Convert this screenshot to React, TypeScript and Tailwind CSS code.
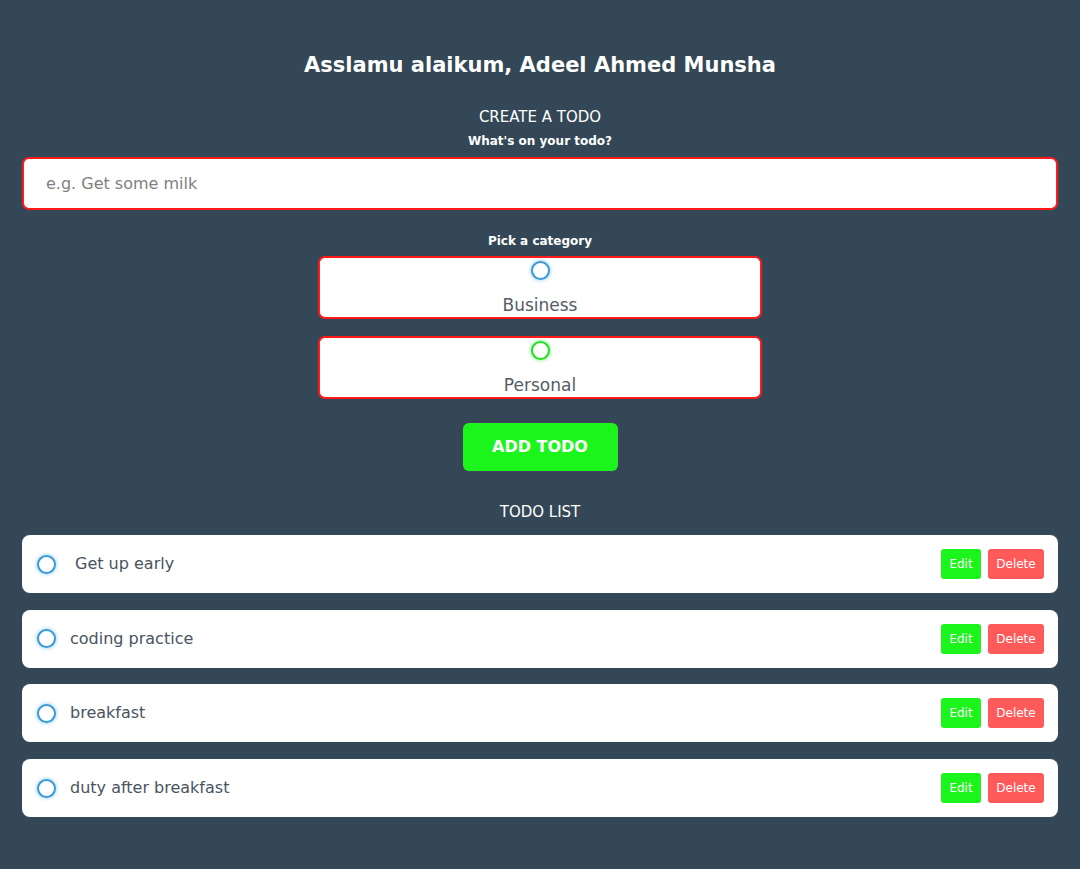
const todos = [
  { text: " Get up early", indent: true },
  { text: "coding practice" },
  { text: "breakfast" },
  { text: "duty after breakfast" },
];

const font = { fontFamily: '"DejaVu Sans", "Noto Sans", sans-serif' };

function Radio({ color }: { color: "blue" | "green" }) {
  return (
    <span
      className={
        color === "blue"
          ? "inline-block h-[19px] w-[19px] shrink-0 rounded-full border-2 border-[#3a9bd5] bg-white shadow-[0_0_4px_rgba(58,155,213,0.6)]"
          : "inline-block h-[19px] w-[19px] shrink-0 rounded-full border-2 border-[#22e022] bg-white shadow-[0_0_4px_rgba(34,224,34,0.6)]"
      }
    />
  );
}

export default function App() {
  return (
    <main className="min-h-[869px] bg-[#334756] px-[22px] pb-10 pt-[50px] text-white" style={font}>
      <h1 className="text-center text-[21px] font-bold leading-[30px]">
        Asslamu alaikum, Adeel Ahmed Munsha
      </h1>

      <section className="mt-[27px] flex flex-col items-center">
        <p className="text-[15px] leading-[20px] text-white">CREATE A TODO</p>
        <p className="mt-[6px] text-[12px] font-bold leading-[16px]">What's on your todo?</p>
        <div className="mt-[8px] h-[53px] w-full rounded-[7px] border-2 border-[#ff1a1a] bg-white px-[22px] text-[16px] leading-[49px] text-[#808080]">
          e.g. Get some milk
        </div>

        <p className="mt-[22px] text-[12px] font-bold leading-[18px]">Pick a category</p>
        <div className="mt-[6px] flex w-[444px] flex-col gap-[17px]">
          {[
            { label: "Business", color: "blue" as const },
            { label: "Personal", color: "green" as const },
          ].map((c) => (
            <label
              key={c.label}
              className="flex h-[63px] flex-col items-center rounded-[7px] border-2 border-[#ff1a1a] bg-white pt-[3px]"
            >
              <Radio color={c.color} />
              <span className="mt-[14px] text-[17px] leading-[22px] text-[#555c66]">{c.label}</span>
            </label>
          ))}
        </div>

        <button className="mt-[24px] h-[48px] w-[155px] rounded-[6px] bg-[#1cf51c] text-[16px] font-bold text-white shadow-[0_0_3px_rgba(120,60,120,0.6)]">
          ADD TODO
        </button>

        <p className="mt-[31px] text-[15px] leading-[20px] text-white">TODO LIST</p>
      </section>

      <ul className="mt-[13px] flex flex-col gap-[16.7px]">
        {todos.map((t) => (
          <li
            key={t.text}
            className="flex h-[58px] items-center rounded-[8px] bg-white pl-[15px] pr-[14px]"
          >
            <Radio color="blue" />
            <span
              className={
                t.indent
                  ? "ml-[19px] flex-1 text-[16px] text-[#4a5360]"
                  : "ml-[14px] flex-1 text-[16px] text-[#4a5360]"
              }
            >
              {t.text.trim()}
            </span>
            <button className="h-[30px] w-[40px] rounded-[3px] bg-[#1cf51c] text-[12px] text-white">
              Edit
            </button>
            <button className="ml-[7px] h-[30px] w-[56px] rounded-[3px] bg-[#ff5a5a] text-[12px] text-white">
              Delete
            </button>
          </li>
        ))}
      </ul>
    </main>
  );
}
